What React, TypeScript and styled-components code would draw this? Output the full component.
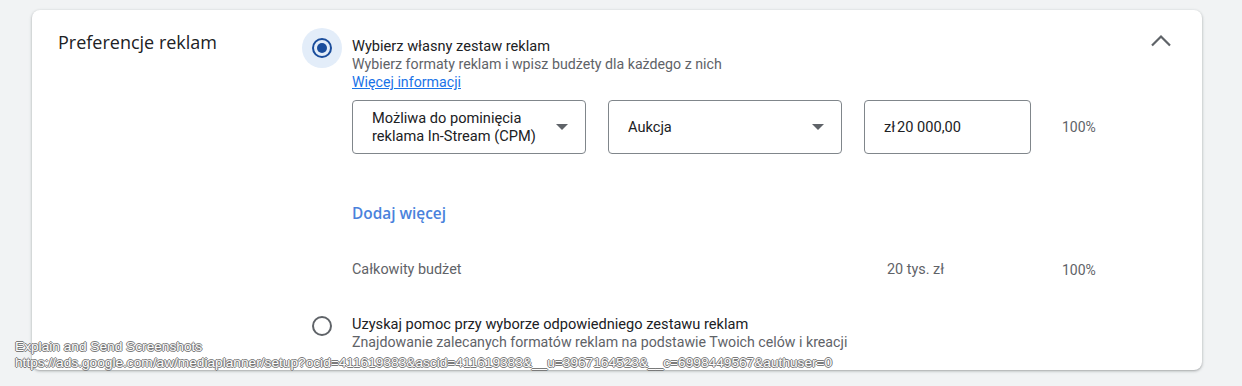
import React from 'react'
import styled, { createGlobalStyle } from 'styled-components'

const GlobalStyle = createGlobalStyle`
  body {
    margin: 0;
    background: #f1f3f4;
    font-family: Roboto, "Liberation Sans", Arial, sans-serif;
    color: #202124;
  }
`

const Page = styled.div`
  position: relative;
  width: 1242px;
  height: 386px;
  padding: 10px 40px 0 32px;
  box-sizing: border-box;
  overflow: hidden;
`

const Card = styled.section`
  display: flex;
  align-items: flex-start;
  height: 360px;
  box-sizing: border-box;
  padding: 18px 29px 20px 26px;
  background: #fff;
  border-radius: 8px;
  box-shadow: 0 1px 2px rgba(60, 64, 67, 0.3), 0 1px 3px 1px rgba(60, 64, 67, 0.12);
`

const Title = styled.h2`
  width: 244px;
  flex: none;
  margin: 2px 0 0;
  font-family: "Open Sans", Roboto, sans-serif;
  font-size: 18px;
  line-height: 24px;
  font-weight: 400;
  color: #202124;
`

const Options = styled.div`
  flex: 1;
  display: flex;
  flex-direction: column;
`

const OptionRow = styled.div<{ $gap?: number }>`
  display: flex;
  align-items: flex-start;
  margin-top: ${p => p.$gap ?? 0}px;
`

const RadioWrap = styled.div<{ $active?: boolean }>`
  width: 40px;
  height: 40px;
  flex: none;
  margin-right: 10px;
  border-radius: 50%;
  display: flex;
  align-items: center;
  justify-content: center;
  background: ${p => (p.$active ? '#e3edf9' : 'transparent')};
`

const RadioRing = styled.span<{ $active?: boolean }>`
  width: 16px;
  height: 16px;
  border-radius: 50%;
  border: 2px solid ${p => (p.$active ? '#1a4d9c' : '#5f6368')};
  display: flex;
  align-items: center;
  justify-content: center;

  &::after {
    content: '';
    display: ${p => (p.$active ? 'block' : 'none')};
    width: 10px;
    height: 10px;
    border-radius: 50%;
    background: #1a4d9c;
  }
`

const OptionText = styled.div`
  margin-top: 9px;
  line-height: 18px;
`

const Label = styled.div`
  font-size: 14.6px;
  color: #202124;
`

const Hint = styled.div`
  font-size: 14.2px;
  color: #5f6368;
`

const MoreLink = styled.a`
  font-size: 14.2px;
  color: #1a73e8;
  text-decoration: underline;
  cursor: pointer;
`

const Details = styled.div`
  margin-left: 50px;
  margin-top: 9px;
`

const Grid = styled.div`
  display: grid;
  grid-template-columns: 234px 234px 167px auto;
  column-gap: 22px;
  align-items: center;
`

const Select = styled.div`
  height: 54px;
  box-sizing: border-box;
  border: 1px solid #80868b;
  border-radius: 4px;
  display: flex;
  align-items: center;
  padding: 0 17px 0 19px;
  font-size: 14.6px;
  line-height: 18px;
  color: #202124;
`

const SelectValue = styled.span`
  flex: 1;
`

const Caret = styled.span`
  width: 0;
  height: 0;
  border-left: 6px solid transparent;
  border-right: 6px solid transparent;
  border-top: 6px solid #5f6368;
`

const Percent = styled.span`
  padding-left: 9px;
  font-size: 14px;
  color: #5f6368;
`

const AddMore = styled.button`
  display: block;
  margin-top: 50px;
  padding: 0;
  border: 0;
  background: none;
  font-family: "Open Sans", Roboto, sans-serif;
  font-size: 15.4px;
  line-height: 20px;
  font-weight: 600;
  color: #4a82dc;
  cursor: pointer;
`

const TotalRow = styled(Grid)`
  margin-top: 36px;
  font-size: 14.4px;
  line-height: 20px;
  color: #5f6368;
`

const TotalLabel = styled.span`
  grid-column: 1 / 3;
`

const TotalValue = styled.span`
  padding-left: 23px;
`

const Toggle = styled.button`
  flex: none;
  width: 24px;
  height: 24px;
  margin-top: 1px;
  padding: 0;
  border: 0;
  background: none;
  color: #5f6368;
  cursor: pointer;
`

const Overlay = styled.div`
  position: absolute;
  left: 15px;
  top: 339px;
  font-family: "Liberation Sans", Arial, sans-serif;
  font-size: 13.7px;
  line-height: 16px;
  color: #fdfdfd;
  text-shadow: -1px 0 #7a7a7a, 1px 0 #7a7a7a, 0 -1px #7a7a7a, 0 1px #7a7a7a;
  pointer-events: none;
  white-space: nowrap;
`

export default function App() {
  return (
    <Page>
      <GlobalStyle />
      <Card>
        <Title>Preferencje reklam</Title>
        <Options>
          <OptionRow>
            <RadioWrap $active>
              <RadioRing $active />
            </RadioWrap>
            <OptionText>
              <Label>Wybierz własny zestaw reklam</Label>
              <Hint>Wybierz formaty reklam i wpisz budżety dla każdego z nich</Hint>
              <MoreLink>Więcej informacji</MoreLink>
            </OptionText>
          </OptionRow>
          <Details>
            <Grid>
              <Select>
                <SelectValue>
                  Możliwa do pominięcia
                  <br />
                  reklama In-Stream (CPM)
                </SelectValue>
                <Caret />
              </Select>
              <Select>
                <SelectValue>Aukcja</SelectValue>
                <Caret />
              </Select>
              <Select>
                <SelectValue>zł{'\u202f'}20 000,00</SelectValue>
              </Select>
              <Percent>100%</Percent>
            </Grid>
            <AddMore>Dodaj więcej</AddMore>
            <TotalRow>
              <TotalLabel>Całkowity budżet</TotalLabel>
              <TotalValue>20 tys. zł</TotalValue>
              <Percent>100%</Percent>
            </TotalRow>
          </Details>
          <OptionRow $gap={26}>
            <RadioWrap>
              <RadioRing />
            </RadioWrap>
            <OptionText>
              <Label>Uzyskaj pomoc przy wyborze odpowiedniego zestawu reklam</Label>
              <Hint>Znajdowanie zalecanych formatów reklam na podstawie Twoich celów i kreacji</Hint>
            </OptionText>
          </OptionRow>
        </Options>
        <Toggle aria-label="Zwiń">
          <svg width="24" height="24" viewBox="0 0 24 24" fill="none">
            <polyline points="3,16.5 12,7.5 21,16.5" stroke="currentColor" strokeWidth="2.2" />
          </svg>
        </Toggle>
      </Card>
      <Overlay>
        Explain and Send Screenshots
        <br />
        https://ads.google.com/aw/mediaplanner/setup?ocid=411619383&amp;ascid=411619383&amp;__u=3967164523&amp;__c=6998449567&amp;authuser=0
      </Overlay>
    </Page>
  )
}
